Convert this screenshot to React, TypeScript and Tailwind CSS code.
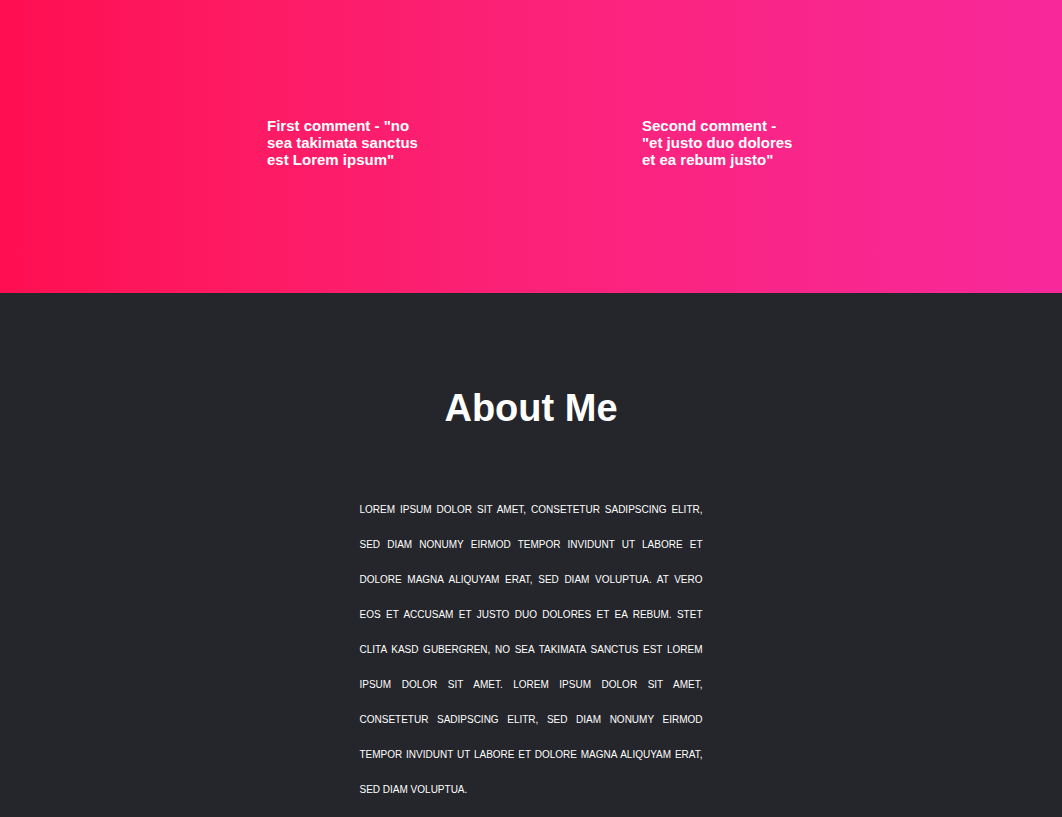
import React from 'react';

const comments = [
  'First comment - "no sea takimata sanctus est Lorem ipsum"',
  'Second comment - "et justo duo dolores et ea rebum justo"',
];

const about =
  'Lorem ipsum dolor sit amet, consetetur sadipscing elitr, sed diam nonumy eirmod tempor invidunt ut labore et dolore magna aliquyam erat, sed diam voluptua. At vero eos et accusam et justo duo dolores et ea rebum. Stet clita kasd gubergren, no sea takimata sanctus est Lorem ipsum dolor sit amet. Lorem ipsum dolor sit amet, consetetur sadipscing elitr, sed diam nonumy eirmod tempor invidunt ut labore et dolore magna aliquyam erat, sed diam voluptua.';

const App: React.FC = () => {
  return (
    <div className="min-h-screen bg-[#25262b] font-['Liberation_Sans',Arial,sans-serif]">
      {/* Comments banner */}
      <section className="h-[293px] bg-gradient-to-r from-[#ff0e50] to-[#f8289b] pt-[117px] pl-[267px]">
        <div className="flex gap-[220px]">
          {comments.map((c) => (
            <p key={c} className="w-[155px] text-[15px] leading-[17px] font-bold text-white">
              {c}
            </p>
          ))}
        </div>
      </section>

      {/* About */}
      <section className="pt-[96px] pb-[40px]">
        <h2 className="text-center text-[38px] leading-none font-bold text-white">About Me</h2>
        <p className="mx-auto mt-[65px] w-[343px] text-justify text-[10px] leading-[35px] uppercase text-white">
          {about}
        </p>
      </section>
    </div>
  );
};

export default App;
